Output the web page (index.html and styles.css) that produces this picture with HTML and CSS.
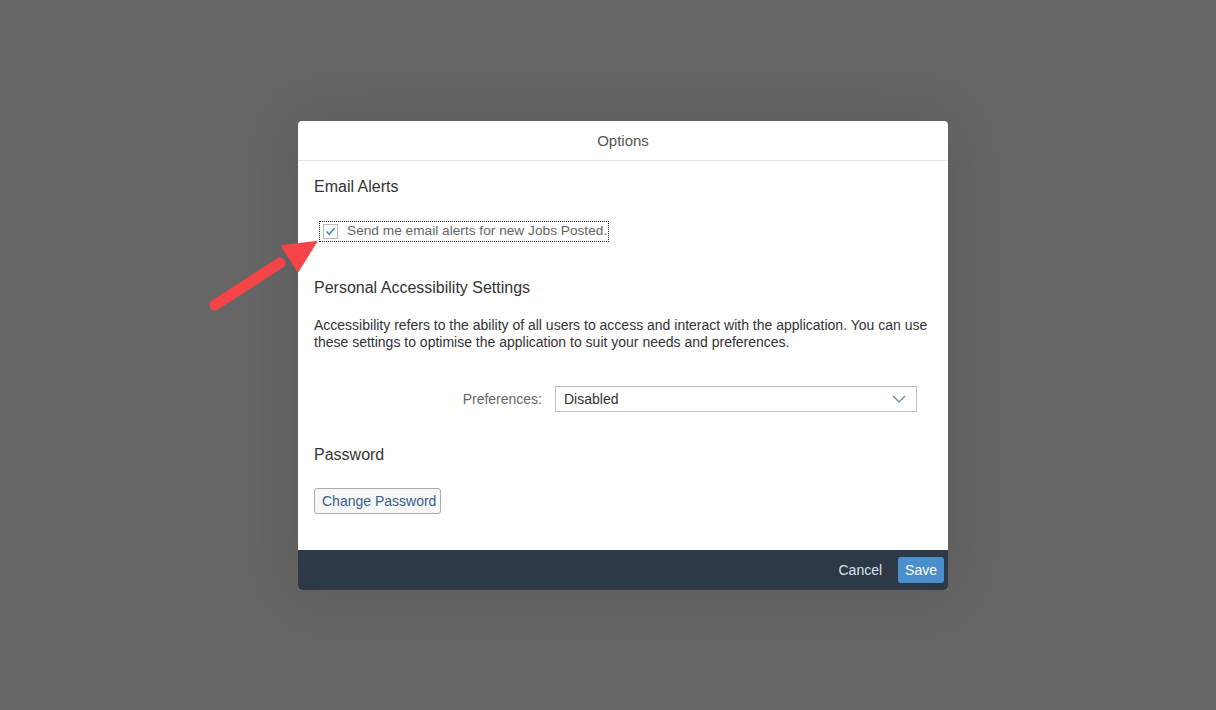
FILE: index.html
```html
<!DOCTYPE html>
<html>
<head>
<meta charset="UTF-8">
<link rel="stylesheet" href="styles.css">
</head>
<body>
<div class="overlay">
	<div class="dialog">
		<div class="dialog-header">Options</div>
		<div class="dialog-content">
			<h3 class="section-title">Email Alerts</h3>
			<div class="check-row">
				<label class="check-focus">
					<span class="check-box">
						<svg width="11" height="11" viewBox="0 0 11 11"><path d="M1.5 5.5 L4.3 8.3 L9.5 2" fill="none" stroke="#3f7fbf" stroke-width="1.4"/></svg>
					</span>
					<span class="check-label">Send me email alerts for new Jobs Posted.</span>
				</label>
			</div>

			<h3 class="section-title title-access">Personal Accessibility Settings</h3>
			<p class="section-text">Accessibility refers to the ability of all users to access and interact with the application. You can use these settings to optimise the application to suit your needs and preferences.</p>

			<div class="form-row">
				<label class="form-label">Preferences:</label>
				<div class="select">
					<span>Disabled</span>
					<svg width="14" height="8" viewBox="0 0 14 8"><path d="M1 1 L7 7 L13 1" fill="none" stroke="#5b7a99" stroke-width="1.1"/></svg>
				</div>
			</div>

			<h3 class="section-title title-password">Password</h3>
			<button class="btn-default" type="button">Change Password</button>
		</div>
		<div class="dialog-footer">
			<button class="btn-link" type="button">Cancel</button>
			<button class="btn-primary" type="button">Save</button>
		</div>
	</div>

	<svg class="arrow" width="130" height="90" viewBox="0 0 130 90">
		<line x1="15" y1="80" x2="80" y2="38" stroke="#f44448" stroke-width="11" stroke-linecap="round"/>
		<polygon points="116,17 82,21 98,46" fill="#f44448" stroke="#f44448" stroke-width="2" stroke-linejoin="round"/>
	</svg>
</div>
</body>
</html>
```

FILE: styles.css
```css
:root {
	--color-overlay: #666666;
	--color-text: #333333;
	--color-dim: #666666;
	--color-footer: #2d3946;
	--color-link: #346187;
	--color-primary: #4a8ecb;
}

html, body {
	margin: 0;
	height: 100%;
}

body {
	background-color: var(--color-overlay);
	font-family: "Liberation Sans", Arial, sans-serif;
	color: var(--color-text);
}

.overlay {
	position: relative;
	height: 100%;
	display: flex;
	align-items: center;
	justify-content: center;
	padding-left: 30px;
	box-sizing: border-box;
}

.dialog {
	width: 650px;
	background: #ffffff;
	border-radius: 4px;
	box-shadow: 0 0 60px rgba(0, 0, 0, 0.12);
	overflow: hidden;
}

.dialog-header {
	height: 39px;
	line-height: 39px;
	text-align: center;
	font-size: 15px;
	color: #555555;
	border-bottom: 1px solid #e5e5e5;
}

.dialog-content {
	padding: 17px 16px 36px 16px;
}

.section-title {
	margin: 0;
	font-size: 16px;
	font-weight: normal;
	color: #333333;
	line-height: 18px;
}

.check-row {
	padding: 25px 0 0 5px;
}

.check-focus {
	display: inline-flex;
	align-items: center;
	gap: 9px;
	padding: 2px 1px 2px 3px;
	border: 1px dotted #222222;
}

.check-box {
	width: 13px;
	height: 13px;
	border: 1px solid #b8b8b8;
	display: flex;
	align-items: center;
	justify-content: center;
	background: #ffffff;
}

.check-label {
	font-size: 13.7px;
	color: #666666;
	line-height: 14px;
}

.title-access {
	margin-top: 37px;
}

.section-text {
	margin: 20px 0 0;
	font-size: 14px;
	line-height: 17px;
	color: #333333;
}

.form-row {
	display: flex;
	align-items: center;
	margin-top: 35px;
	padding-left: 146px;
}

.form-label {
	width: 82px;
	text-align: right;
	font-size: 14px;
	color: #666666;
	margin-right: 13px;
}

.select {
	height: 24px;
	border: 1px solid #bfbfbf;
	display: flex;
	align-items: center;
	justify-content: space-between;
	padding: 0 10px 0 8px;
	font-size: 14px;
	color: #333333;
	box-sizing: content-box;
	width: 342px;
}

.title-password {
	margin-top: 34px;
}

.btn-default {
	margin-top: 24px;
	height: 26px;
	padding: 0 4px 0 7px;
	font-family: inherit;
	font-size: 14px;
	color: var(--color-link);
	background: #f7f7f7;
	border: 1px solid #ababab;
	border-radius: 3px;
}

.dialog-footer {
	height: 40px;
	background: var(--color-footer);
	display: flex;
	align-items: center;
	justify-content: flex-end;
	padding-right: 4px;
	gap: 9px;
}

.btn-link {
	background: none;
	border: none;
	color: #d9e2eb;
	font-family: inherit;
	font-size: 14px;
	padding: 0 7px;
}

.btn-primary {
	height: 26px;
	padding: 0 7px;
	background: var(--color-primary);
	color: #ffffff;
	border: none;
	border-radius: 3px;
	font-family: inherit;
	font-size: 14px;
}

.arrow {
	position: absolute;
	left: 200px;
	top: 225px;
}
```
